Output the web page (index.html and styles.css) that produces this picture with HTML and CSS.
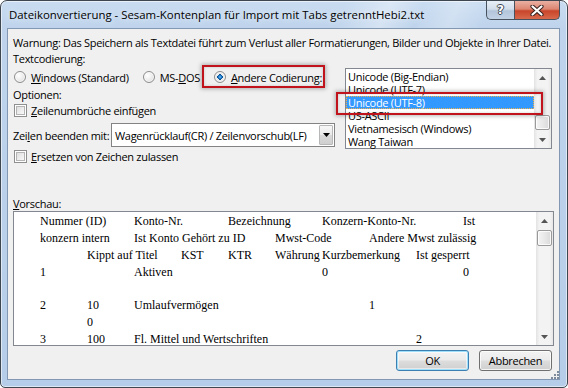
FILE: index.html
```html
<!DOCTYPE html>
<html lang="de">
<head>
<meta charset="utf-8">
<title>Dateikonvertierung</title>
<link rel="stylesheet" href="styles.css">
</head>
<body>
<div class="window">
  <div class="titlebar">
    <div class="title">Dateikonvertierung - Sesam-Kontenplan für Import mit Tabs getrenntHebi2.txt</div>
    <div class="caption-btns">
      <div class="cbtn help"><span class="q">?</span></div>
      <div class="cbtn close">
        <svg width="14" height="11" viewBox="0 0 14 11"><path d="M2.5 1.5 L11.5 9.5 M11.5 1.5 L2.5 9.5" stroke="#3a2320" stroke-width="4.2" stroke-linecap="round" fill="none"/><path d="M2.5 1.5 L11.5 9.5 M11.5 1.5 L2.5 9.5" stroke="#ffffff" stroke-width="2.2" stroke-linecap="round" fill="none"/></svg>
      </div>
    </div>
  </div>
  <div class="client">
    <div class="line">Warnung: Das Speichern als Textdatei führt zum Verlust aller Formatierungen, Bilder und Objekte in Ihrer Datei.</div>
    <div class="line enc-label">Textcodierung:</div>
    <div class="mid">
      <div class="opts">
        <div class="radios">
          <div class="radio"><span class="rb"></span><span><u>W</u>indows (Standard)</span></div>
          <div class="radio"><span class="rb"></span><span>MS-<u>D</u>OS</span></div>
          <div class="radio"><span class="rb on"></span><span><u>A</u>ndere Codierung:</span></div>
        </div>
        <div class="line opt-label">Optionen:</div>
        <div class="check first"><span class="cb"></span><span><u>Z</u>eilenumbrüche einfügen</span></div>
        <div class="endrow">
          <span class="endlabel">Zei<u>l</u>en beenden mit:</span>
          <div class="select">
            <span class="seltext">Wagenrücklauf(CR) / Zeilenvorschub(LF)</span>
            <span class="ddbtn"><svg width="7" height="4" viewBox="0 0 7 4"><path d="M0 0 L7 0 L3.5 4 Z" fill="#000"/></svg></span>
          </div>
        </div>
        <div class="check second"><span class="cb"></span><span><u>E</u>rsetzen von Zeichen zulassen</span></div>
      </div>
      <div class="listbox">
        <div class="items">
          <div class="item">Unicode (Big-Endian)</div>
          <div class="item">Unicode (UTF-7)</div>
          <div class="item sel">Unicode (UTF-8)</div>
          <div class="item">US-ASCII</div>
          <div class="item">Vietnamesisch (Windows)</div>
          <div class="item">Wang Taiwan</div>
        </div>
        <div class="vscroll small">
          <div class="arrow"><svg width="7" height="4" viewBox="0 0 7 4"><path d="M0 4 L3.5 0 L7 4 Z" fill="#555"/></svg></div>
          <div class="thumb"></div>
          <div class="track"></div>
          <div class="arrow"><svg width="7" height="4" viewBox="0 0 7 4"><path d="M0 0 L7 0 L3.5 4 Z" fill="#555"/></svg></div>
        </div>
      </div>
    </div>
    <div class="line vlabel"><u>V</u>orschau:</div>
    <div class="preview">
      <div class="ptext"><div class="pl">Nummer (ID)&#9;Konto-Nr.&#9;Bezeichnung&#9;Konzern-Konto-Nr.&#9;Ist</div><div class="pl">konzern intern&#9;Ist Konto Gehört zu ID&#9;Mwst-Code&#9;Andere Mwst zulässig</div><div class="pl">&#9;Kippt auf Titel&#9;KST&#9;KTR&#9;<span class="cell">Währung</span>Kurzbemerkung&#9;Ist gesperrt</div><div class="pl">1&#9;&#9;Aktiven&#9;&#9;&#9;&#9;0&#9;&#9;&#9;0</div><div class="pl"> </div><div class="pl">2&#9;10&#9;Umlaufvermögen&#9;&#9;&#9;&#9;1</div><div class="pl">&#9;0</div><div class="pl">3&#9;100&#9;Fl. Mittel und Wertschriften&#9;&#9;&#9;&#9;2</div></div>
      <div class="vscroll big">
        <div class="arrow"><svg width="7" height="4" viewBox="0 0 7 4"><path d="M0 4 L3.5 0 L7 4 Z" fill="#555"/></svg></div>
        <div class="thumb"></div>
        <div class="track"></div>
        <div class="arrow"><svg width="7" height="4" viewBox="0 0 7 4"><path d="M0 0 L7 0 L3.5 4 Z" fill="#555"/></svg></div>
      </div>
    </div>
    <div class="buttons">
      <div class="btn default">OK</div>
      <div class="btn">Abbrechen</div>
    </div>
    <div class="mark mark1"></div>
    <div class="mark mark2"></div>
    <div class="grip">
      <svg width="10" height="10" viewBox="0 0 10 10" fill="#7d8b9c">
        <rect x="8" y="2" width="2" height="2"/><rect x="5" y="5" width="2" height="2"/><rect x="8" y="5" width="2" height="2"/>
        <rect x="2" y="8" width="2" height="2"/><rect x="5" y="8" width="2" height="2"/><rect x="8" y="8" width="2" height="2"/>
      </svg>
    </div>
  </div>
</div>
</body>
</html>
```

FILE: styles.css
```css
* { box-sizing: border-box; margin: 0; padding: 0; }
html, body { width: 568px; height: 388px; overflow: hidden; background: #ffffff; }
body {
  font-family: "Open Sans", "Noto Sans", sans-serif;
  font-size: 11px;
  letter-spacing: -0.3px;
  color: #000;
}
u { text-decoration: underline; text-underline-offset: 1px; }

.window {
  width: 568px;
  height: 388px;
  border: 1px solid #3e4650;
  border-radius: 7px 7px 5px 5px;
  background: linear-gradient(180deg, #c9dcf1 0, #bfd4ec 26px, #b6cde9 100%);
  box-shadow: inset 0 0 0 1px rgba(255,255,255,0.55);
  padding: 0 7px 7px 6px;
  display: flex;
  flex-direction: column;
  overflow: hidden;
}

.titlebar {
  height: 27px;
  flex: none;
  display: flex;
  align-items: flex-start;
  background: linear-gradient(115deg, rgba(255,255,255,0) 60%, rgba(255,255,255,0.35) 68%, rgba(255,255,255,0) 74%, rgba(255,255,255,0.25) 80%, rgba(255,255,255,0) 86%);
}
.title {
  padding: 6px 0 0 2px;
  line-height: 16px;
  font-size: 11.4px;
  letter-spacing: 0;
  white-space: nowrap;
  text-shadow: 0 0 6px rgba(255,255,255,0.9);
}
.caption-btns {
  margin-left: auto;
  display: flex;
  height: 19px;
}
.cbtn {
  height: 19px;
  display: flex;
  align-items: center;
  justify-content: center;
  border: 1px solid #48525e;
  border-top: none;
}
.help {
  width: 28px;
  border-right: none;
  border-radius: 0 0 0 5px;
  background: linear-gradient(180deg, #e7eef6 0, #d2deeb 45%, #b3c5da 55%, #c3d3e6 100%);
}
.q {
  color: #fff;
  font-family: "DejaVu Sans", sans-serif;
  font-weight: bold;
  font-size: 12px;
  line-height: 12px;
  letter-spacing: 0;
  text-shadow: 1px 0 0 #3b4652, -1px 0 0 #3b4652, 0 1px 0 #3b4652, 0 -1px 0 #3b4652;
}
.close {
  width: 46px;
  border-radius: 0 0 5px 0;
  background: linear-gradient(180deg, #eab0a2 0, #dc8672 45%, #c8452a 55%, #d8694c 100%);
}

.client {
  flex: 1;
  position: relative;
  background: #f0f0f0;
  border: 1px solid #8298b2;
  padding: 6px 5px 0 5px;
  display: flex;
  flex-direction: column;
}

.line { height: 15px; line-height: 15px; white-space: nowrap; }
.enc-label { margin-top: 1px; }

.mid { display: flex; margin-top: 2px; }
.opts { flex: 1; }

.radios { display: flex; align-items: center; height: 18px; }
.radio { display: flex; align-items: center; margin-right: 13px; white-space: nowrap; }
.rb {
  width: 12px;
  height: 12px;
  margin: 0 5px 0 1px;
  border-radius: 50%;
  border: 1px solid #8d8d8d;
  background: radial-gradient(circle at 35% 35%, #ffffff 0, #ececec 50%, #d4d4d4 100%);
  box-shadow: inset 0 0 0 1px rgba(255,255,255,0.7);
  flex: none;
}
.rb.on {
  background: radial-gradient(circle at 50% 50%, #6fc2ff 0, #1e79c8 22%, #0a4f8d 36%, #eeeeee 40%, #d9d9d9 100%);
}

.opt-label { margin-top: 1px; }

.check { display: flex; align-items: center; height: 15px; white-space: nowrap; }
.check.first { margin-top: 1px; }
.check.second { margin-top: 2px; height: 14px; }
.cb {
  width: 13px;
  height: 13px;
  margin: 0 4px 0 1px;
  border: 1px solid #8e8f8f;
  background: linear-gradient(135deg, #d8d8d8 0, #f4f4f4 70%, #ffffff 100%);
  box-shadow: inset 0 0 0 1px #ffffff, inset 0 0 0 2px #b4b4b4;
  flex: none;
}

.endrow { display: flex; align-items: center; height: 24px; margin-top: 5px; }
.endlabel { width: 98px; white-space: nowrap; }
.select {
  width: 224px;
  height: 24px;
  border: 1px solid #838383;
  background: #fff;
  display: flex;
  align-items: center;
  padding-left: 3px;
}
.seltext { flex: 1; white-space: nowrap; }
.ddbtn {
  width: 14px;
  height: 20px;
  margin-right: 1px;
  border: 1px solid #b7b7b7;
  border-radius: 1px;
  background: linear-gradient(180deg, #f7f7f7 0, #e9e9e9 50%, #d9d9d9 51%, #cfcfcf 100%);
  display: flex;
  align-items: center;
  justify-content: center;
}

.listbox {
  width: 207px;
  height: 81px;
  margin-right: 2px;
  border: 1px solid #828790;
  background: #fff;
  display: flex;
}
.items { flex: 1; padding-top: 1px; }
.item { height: 13px; line-height: 13px; padding-left: 2px; white-space: nowrap; }
.item.sel {
  background: #3399ff;
  color: #fff;
  outline: 1px dotted #f2b24a;
  outline-offset: -1px;
}

.vscroll {
  width: 17px;
  flex: none;
  display: flex;
  flex-direction: column;
  background: linear-gradient(90deg, #e3e3e3 0, #f3f3f3 20%, #f3f3f3 80%, #e8e8e8 100%);
}
.vscroll .arrow { height: 17px; display: flex; align-items: center; justify-content: center; flex: none; }
.vscroll .track { flex: 1; }
.vscroll .thumb {
  margin: 0 1px;
  border: 1px solid #9a9a9a;
  border-radius: 2px;
  background: linear-gradient(90deg, #f4f4f4 0, #e8e8e8 50%, #dadada 100%);
  box-shadow: inset 0 0 0 1px rgba(255,255,255,0.8);
  flex: none;
}
.vscroll.small .thumb { height: 15px; margin-top: 29px; }
.vscroll.big .thumb { height: 16px; margin-top: 1px; }

.vlabel { margin-top: 33px; }

.preview {
  height: 135px;
  border: 1px solid #828790;
  background: #fff;
  display: flex;
  overflow: hidden;
}
.ptext {
  flex: 1;
  padding: 1px 0 0 26px;
  font-family: "Liberation Serif", "Times New Roman", serif;
  font-size: 12px;
  letter-spacing: 0;
  line-height: 16.9px;
  overflow: hidden;
}
.pl { height: 16.9px; white-space: pre; tab-size: 47px; }
.cell { display: inline-block; width: 47px; }

.buttons {
  display: flex;
  justify-content: flex-end;
  gap: 10px;
  margin-top: 4px;
  padding-right: 2px;
}
.btn {
  width: 73px;
  height: 21px;
  border: 1px solid #707070;
  border-radius: 3px;
  background: linear-gradient(180deg, #f3f3f3 0, #ebebeb 48%, #dddddd 52%, #cfcfcf 100%);
  box-shadow: inset 0 0 0 1px rgba(255,255,255,0.75);
  display: flex;
  align-items: center;
  justify-content: center;
  line-height: 15px;
}
.btn.default {
  border-color: #3c7fb1;
  box-shadow: inset 0 0 0 1px #9ee0fb, inset 0 0 0 2px rgba(255,255,255,0.5);
}

.mark {
  position: absolute;
  border: 2px solid #c0131b;
  box-shadow: 0 0 4px 1px rgba(0,0,0,0.28), inset 0 0 3px rgba(0,0,0,0.18);
}
.mark1 { left: 194px; top: 36px; width: 123px; height: 23px; }
.mark2 { left: 328px; top: 63px; width: 207px; height: 23px; }

.grip { position: absolute; right: 0; bottom: 0; width: 10px; height: 10px; display: flex; }
```
